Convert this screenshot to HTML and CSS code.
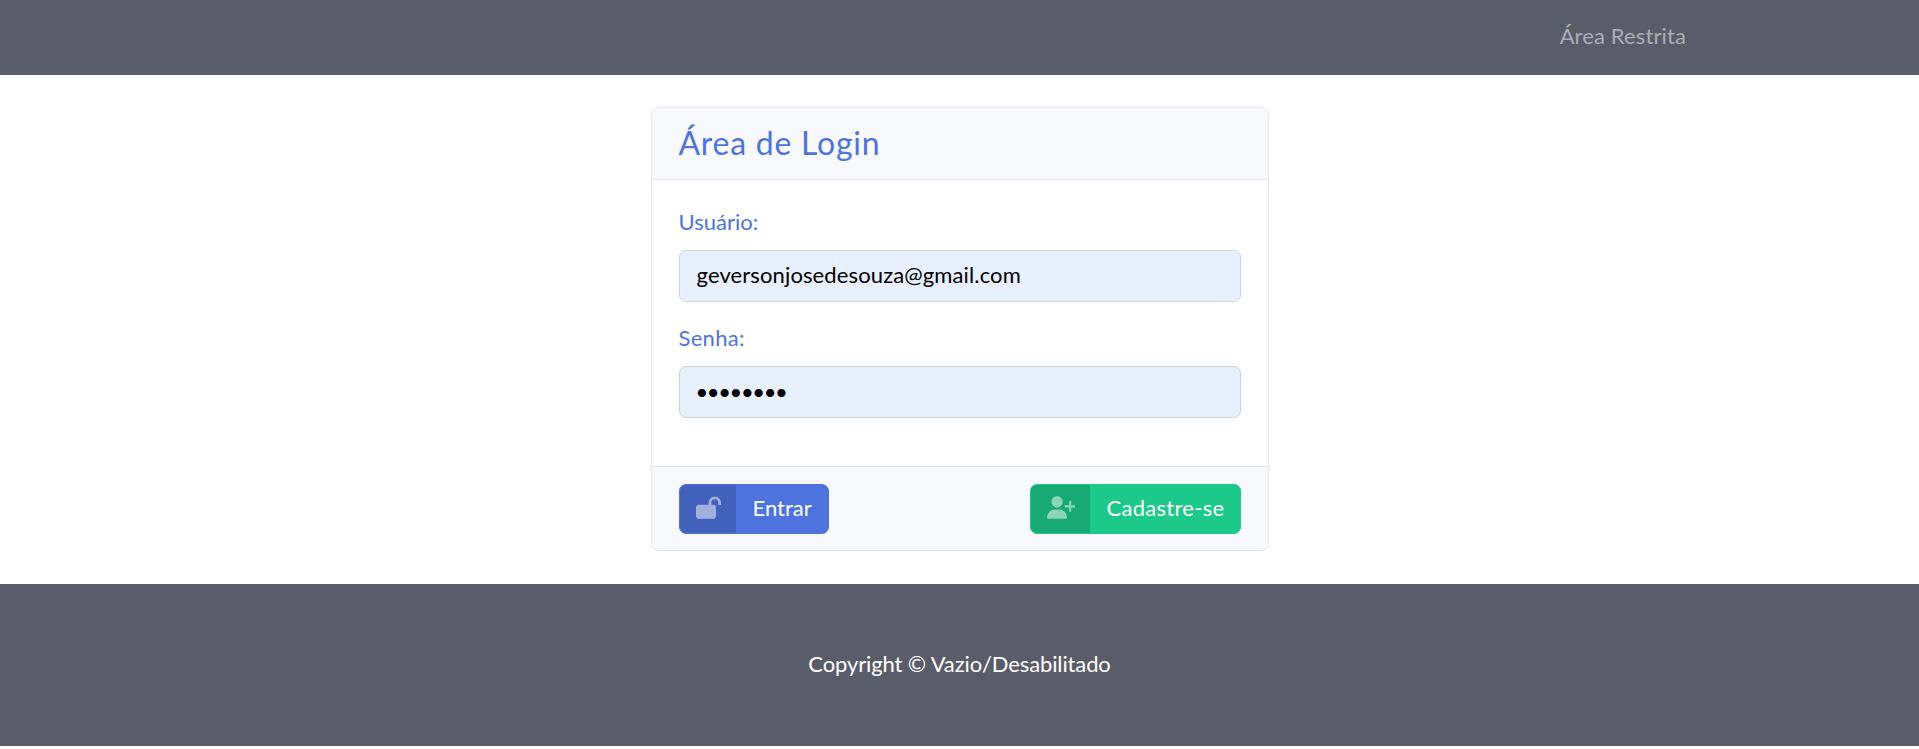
FILE: index.html
```html
<!DOCTYPE html>
<html lang="pt-br">
<head>
<meta charset="utf-8">
<title>Área de Login</title>
<link rel="stylesheet" href="styles.css">
</head>
<body>
<nav class="navbar"><a class="nav-link">Área Restrita</a></nav>
<main class="content">
  <form class="card">
    <div class="card-header"><h1 class="title">Área de Login</h1></div>
    <div class="card-body">
      <label class="label label-user" for="user">Usuário:</label>
      <input class="field field-user" id="user" type="text" value="geversonjosedesouza@gmail.com" spellcheck="false">
      <label class="label label-pass" for="pass">Senha:</label>
      <input class="field field-pass" id="pass" type="password" value="12345678">
    </div>
    <div class="card-footer">
      <a class="btn btn-primary">
        <span class="icon"><svg width="25" height="23" viewBox="0 0 25 23"><rect x="0" y="8.7" width="20" height="14" rx="2.8" fill="currentColor"/><path d="M14 8.7V6.6a4.8 4.8 0 0 1 9.6 0V9" fill="none" stroke="currentColor" stroke-width="2.8"/></svg></span>
        <span class="text">Entrar</span>
      </a>
      <a class="btn btn-success">
        <span class="icon"><svg width="28" height="23" viewBox="0 0 28 23"><circle cx="10.1" cy="5.8" r="5.7" fill="currentColor"/><path d="M8 13.5h4a8 8 0 0 1 8 8A1.3 1.3 0 0 1 18.7 22.8H1.3A1.3 1.3 0 0 1 0 21.5a8 8 0 0 1 8-8Z" fill="currentColor"/><path d="M23.2 5.6v9.4M18.5 10.3h9.4" stroke="currentColor" stroke-width="2.2" stroke-linecap="round"/></svg></span>
        <span class="text">Cadastre-se</span>
      </a>
    </div>
  </form>
</main>
<footer class="footer"><span class="copyright">Copyright © Vazio/Desabilitado</span></footer>
</body>
</html>
```
FILE: styles.css
```css
* { box-sizing: border-box; }
body {
  margin: 0;
  background: #fff;
  font-family: Lato, "Open Sans", sans-serif;
  font-size: 22px;
  line-height: 34px;
}
.navbar {
  height: 75px;
  display: flex;
  align-items: center;
  justify-content: flex-end;
  padding: 0 233px 3px 0;
  background: #5a5c69;
}
.nav-link { color: #acadb4; letter-spacing: .12px; }
.content {
  height: 509px;
  display: flex;
  justify-content: center;
  padding-top: 32px;
}
.card {
  width: 618px;
  height: 444px;
  display: flex;
  flex-direction: column;
  border: 1px solid #e3e6f0;
  border-radius: 7px;
  overflow: hidden;
}
.card-header {
  height: 72px;
  padding: 16px 27px;
  background: #f8f9fc;
  border-bottom: 1px solid #e3e6f0;
}
.title {
  margin: 0;
  font-size: 32px;
  line-height: 38px;
  font-weight: 400;
  letter-spacing: .75px;
  color: #4e73df;
}
.card-body {
  flex: 1;
  display: flex;
  flex-direction: column;
  padding: 25px 27px 0;
}
.label {
  color: #4e73df;
  margin-bottom: 11px;
}
.label-pass { letter-spacing: .3px; }
.field {
  width: 100%;
  height: 52px;
  margin: 0 0 19px;
  padding: 0 16px 3px 17px;
  border: 1px solid #d1d3e2;
  border-radius: 7px;
  background: #e8f0fe;
  color: #000;
  font: inherit;
  letter-spacing: .12px;
}
.field-pass {
  padding: 0 16px 1px;
  letter-spacing: -1.4px;
}
.card-footer {
  height: 84px;
  display: flex;
  align-items: flex-start;
  justify-content: space-between;
  padding: 17px 27px;
  background: #f8f9fc;
  border-top: 1px solid #e3e6f0;
}
.btn {
  height: 50px;
  display: flex;
  border: 1px solid;
  border-radius: 7px;
  overflow: hidden;
  color: #fff;
}
.btn-primary { width: 150px; background: #4e73df; border-color: #4e73df; }
.btn-success { width: 211px; background: #1cc88a; border-color: #1cc88a; }
.icon {
  display: flex;
  align-items: center;
  padding: 0 0 3px 16px;
  width: 56px;
  color: rgba(255, 255, 255, .5);
  background: rgba(0, 0, 0, .15);
}
.btn-success .icon { width: 59px; }
.text { padding: 6px 0 0 17px; white-space: nowrap; }
.btn-success .text { letter-spacing: .28px; }
.footer {
  height: 162px;
  display: flex;
  align-items: center;
  justify-content: center;
  padding-bottom: 2px;
  background: #5a5c69;
  color: #fff;
  letter-spacing: -.12px;
}
```
